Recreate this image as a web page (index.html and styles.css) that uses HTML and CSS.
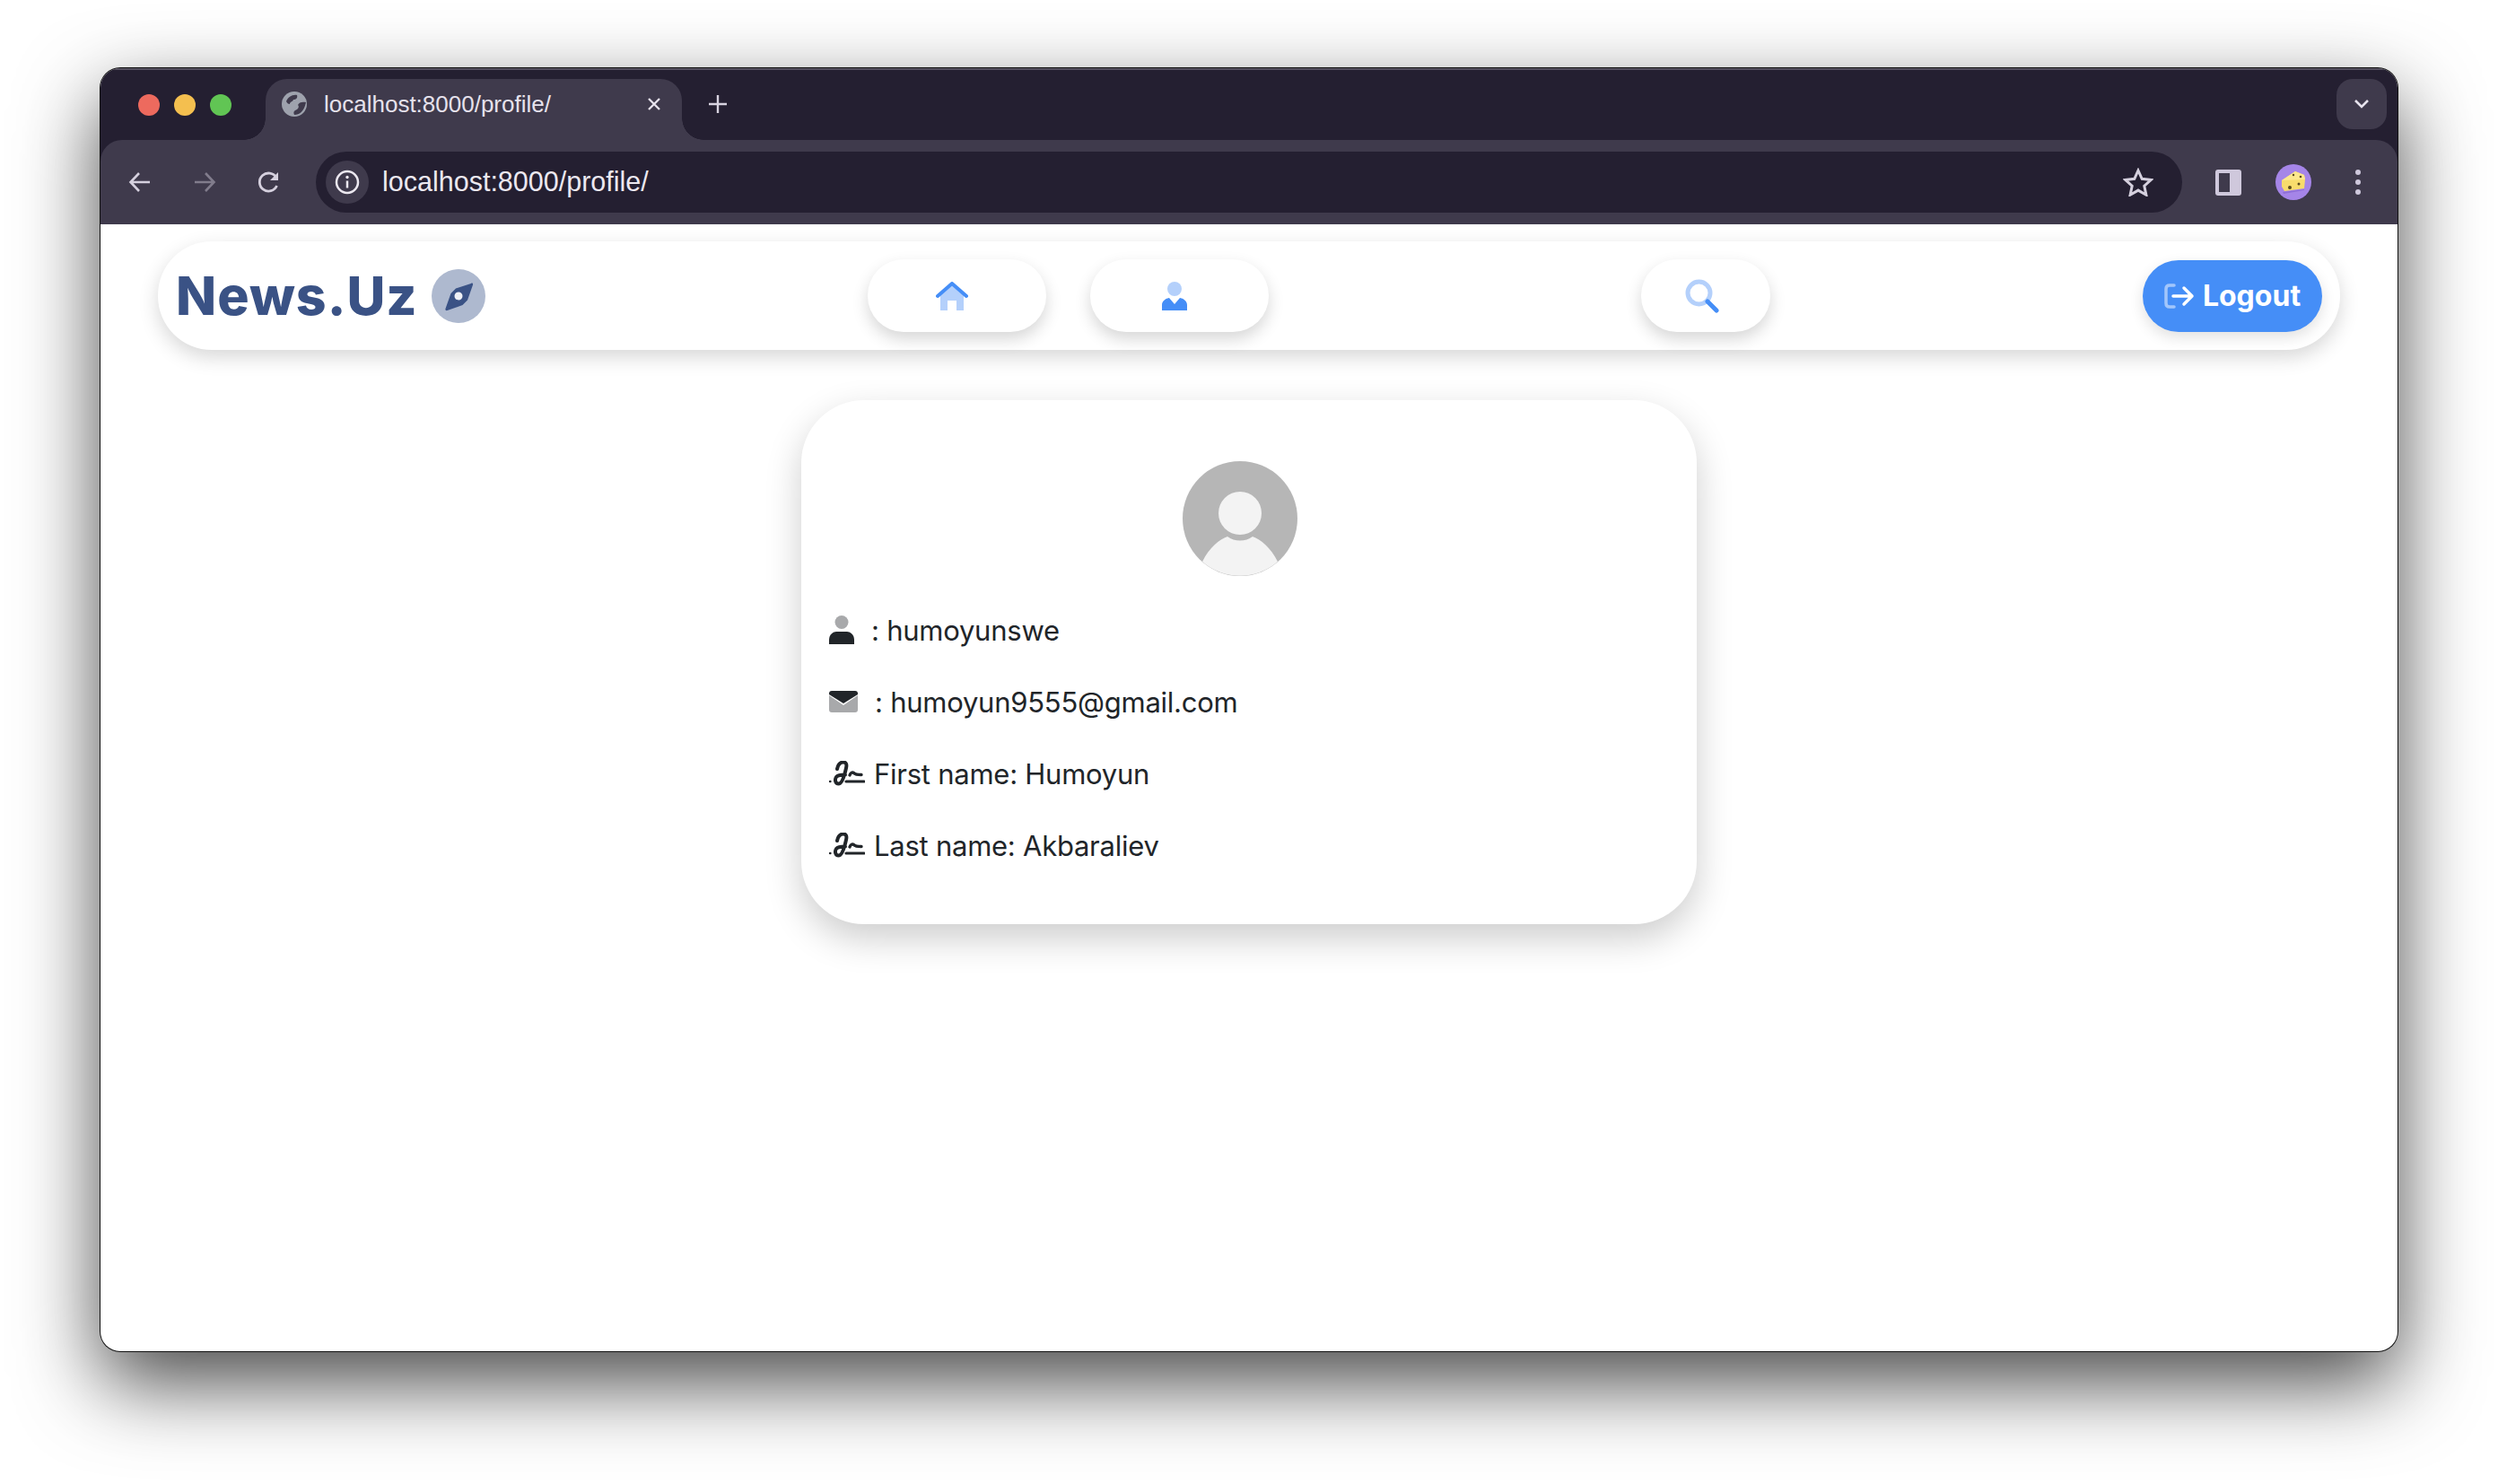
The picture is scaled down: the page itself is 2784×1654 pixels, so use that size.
FILE: index.html
```html
<!DOCTYPE html>
<html lang="en">
<head>
  <meta charset="UTF-8" />
  <title>News.Uz</title>
  <link rel="stylesheet" href="styles.css">
</head>
<body>

<div class="window">

  <div class="chrome">
    <div class="tabstrip">
      <div class="lights">
        <span class="light red"></span>
        <span class="light yellow"></span>
        <span class="light green"></span>
      </div>
      <div class="tab">
        <svg class="globe" viewBox="0 0 28 28">
          <circle cx="14" cy="14" r="14" fill="#9ea2ad"/>
          <path d="M5 11c2-5 7-8 12-7 1 3-1 5-4 5-1 3-4 2-4 5-2 0-3-1-4-3zM27 12c-4-1-8 0-9 3 2 2 0 5-3 6-2 1-2 3-1 5 6 0 11-4 13-14z" fill="#3f3a4c"/>
        </svg>
        <span class="tab-title">localhost:8000/profile/</span>
        <svg class="tab-close" viewBox="0 0 16 16"><path d="M2 2l12 12M14 2L2 14" stroke="#e6e2ec" stroke-width="2.4"/></svg>
      </div>
      <svg class="new-tab" viewBox="0 0 22 22"><path d="M11 1v20M1 11h20" stroke="#d8d3e0" stroke-width="2.4"/></svg>
      <div class="tab-menu">
        <svg viewBox="0 0 18 12" width="18" height="12"><path d="M2 2l7 7 7-7" fill="none" stroke="#e6e2ec" stroke-width="2.6"/></svg>
      </div>
    </div>

    <div class="toolbar">
      <svg class="tool-icon" viewBox="0 0 26 26"><path d="M24 13H3M12 3L2.500 13 12 23" fill="none" stroke="#d5d0de" stroke-width="2.600"/></svg>
      <svg class="tool-icon forward" viewBox="0 0 26 26"><path d="M2 13h21M14 3l9.500 10L14 23" fill="none" stroke="#817c8c" stroke-width="2.600"/></svg>
      <svg class="tool-icon reload" viewBox="0 0 26 26"><path d="M21.500 17a10 10 0 1 1-.5-9" fill="none" stroke="#d5d0de" stroke-width="2.800"/><path d="M23 2v9h-9z" fill="#d5d0de"/></svg>
      <div class="omnibox">
        <span class="info-chip">
          <svg viewBox="0 0 28 28" width="28" height="28"><circle cx="14" cy="14" r="12" fill="none" stroke="#ece8f0" stroke-width="2.500"/><path d="M14 12.500v8" stroke="#ece8f0" stroke-width="2.500"/><circle cx="14" cy="8.500" r="1.700" fill="#ece8f0"/></svg>
        </span>
        <span class="url">localhost:8000/profile/</span>
        <svg class="star" viewBox="0 0 34 32" width="34" height="32"><path d="M17 3l4.200 9.300 10.100 1.100-7.500 6.800 2.100 10-8.900-5.100-8.900 5.100 2.100-10-7.500-6.800 10.100-1.100z" fill="none" stroke="#d5d0de" stroke-width="3"/></svg>
      </div>
      <div class="panel-icon"><span class="panel-hole"></span></div>
      <svg class="cheese" viewBox="0 0 40 40" width="40" height="40">
        <circle cx="20" cy="20" r="20" fill="#a585e8"/>
        <path d="M8 31l24-3V29L9 33z" fill="#8f6fd6"/>
        <path d="M7 18l15-10 10 4 1 5-1 10-22 3-3-5z" fill="#f8dc6c"/>
        <path d="M7 18l15-10 10 4 1 5z" fill="#fbe88f"/>
        <circle cx="16" cy="26" r="2" fill="#5a4a1e"/>
        <circle cx="26" cy="22" r="1.500" fill="#5a4a1e"/>
        <circle cx="28" cy="14" r="1.300" fill="#5a4a1e"/>
        <circle cx="20" cy="12" r="1.200" fill="#5a4a1e"/>
      </svg>
      <div class="dots"><span></span><span></span><span></span></div>
    </div>
  </div>

  <div class="page">
    <nav class="navbar">
      <a class="brand">
        <span class="brand-name">News.Uz</span>
        <span class="compass">
          <svg viewBox="0 0 60 60" width="60" height="60">
            <path d="M44 16c1-1 2.500 0 2 1.500l-6 17-5.500 5.500-17 6c-1.500.5-2.500-.5-2-2l6-17 5.500-5.500z" fill="#3a5285"/>
            <circle cx="30" cy="30" r="4.500" fill="#eef0f5"/>
          </svg>
        </span>
      </a>
      <a class="nav-btn home-btn">
        <svg viewBox="0 0 36 32" width="36" height="32">
          <path d="M5 15L18 3l13 12v17h-8V21h-10v11H5z" fill="#b4d0fb"/>
          <path d="M2 16L18 2l16 14" fill="none" stroke="#458ef7" stroke-width="4" stroke-linecap="round" stroke-linejoin="round"/>
        </svg>
      </a>
      <a class="nav-btn user-btn">
        <svg viewBox="0 0 28 32" width="28" height="32">
          <ellipse cx="14" cy="8" rx="8" ry="8" fill="#b4d0fb"/>
          <path d="M0 32v-6c0-4 3-7 8-8l6 7 6-7c5 1 8 4 8 8v6z" fill="#458ef7"/>
        </svg>
      </a>
      <a class="nav-btn search-btn">
        <svg viewBox="0 0 38 38" width="38" height="38">
          <circle cx="15.500" cy="15.500" r="12.500" fill="none" stroke="#b4d0fb" stroke-width="5"/>
          <path d="M25 25l10 10" stroke="#458ef7" stroke-width="5" stroke-linecap="round"/>
        </svg>
      </a>
      <a class="logout-btn">
        <svg viewBox="0 0 34 30" width="34" height="30">
          <path d="M11 3H6C3.500 3 2 4.500 2 7v16c0 2.500 1.500 4 4 4h5" fill="none" stroke="#a2c6fb" stroke-width="3.500" stroke-linecap="round"/>
          <path d="M10 15h21M22 6l9 9-9 9" fill="none" stroke="#fff" stroke-width="3.500" stroke-linecap="round" stroke-linejoin="round"/>
        </svg>
        <span>Logout</span>
      </a>
    </nav>

    <main class="card">
      <svg class="avatar" viewBox="0 0 128 128" width="128" height="128">
        <circle cx="64" cy="64" r="64" fill="#b6b6b6"/>
        <ellipse cx="64" cy="58" rx="24" ry="24" fill="#f3f3f3"/>
        <path d="M22 112C30 96 41 87 50 84c8 6 20 6 28 0 9 3 20 12 28 28A64 64 0 0 1 22 112z" fill="#f3f3f3"/>
      </svg>

      <div class="row">
        <svg class="icon icon-user" viewBox="0 0 28 32" width="28" height="32">
          <circle cx="14" cy="7.500" r="7.500" fill="#a8a9ab"/>
          <path d="M0 32v-5c0-6 5-9 8-9h12c3 0 8 3 8 9v5z" fill="#212529"/>
        </svg>
        <span>: humoyunswe</span>
      </div>
      <div class="row">
        <svg class="icon icon-mail" viewBox="0 0 32 24" width="32" height="24">
          <path d="M0 5l16 11L32 5v16c0 2-1 3-3 3H3c-2 0-3-1-3-3z" fill="#a8a9ab"/>
          <path d="M3 0h26c2 0 3 1 3 3v1L16 14 0 4V3c0-2 1-3 3-3z" fill="#212529"/>
        </svg>
        <span>: humoyun9555@gmail.com</span>
      </div>
      <div class="row">
        <svg class="icon icon-sign" viewBox="0 0 40 28" width="40" height="28">
          <use href="#signature"/>
        </svg>
        <span>First name: Humoyun</span>
      </div>
      <div class="row">
        <svg class="icon icon-sign" viewBox="0 0 40 28" width="40" height="28">
          <g id="signature" fill="none" stroke="#212529" stroke-linecap="round">
            <path d="M1 23h.4" stroke-width="2.400"/>
            <path d="M9 9C10 4 13 1.500 16 1.500 19 1.500 20 4 19 8 17.500 15 15 25.500 10.500 25.500 7 25.500 6 21 8 18 10 15.500 14 15.500 18 15.500" stroke-width="4"/>
            <path d="M23 16c1-3 3-3.500 4.500-2.500 1.500 1.500 3.500 2 8.500 2" stroke-width="3.400"/>
            <path d="M19 23h20" stroke-width="3.200"/>
          </g>
        </svg>
        <span>Last name: Akbaraliev</span>
      </div>
    </main>
  </div>

</div>

</body>
</html>
```

FILE: styles.css
```css
* {
  box-sizing: border-box;
}

html,
body {
  height: 100%;
}

body {
  margin: 0;
  padding: 76px 0 0 112px;
  background-color: #fff;
  overflow: hidden;
  font-family: "Inter", "Liberation Sans", sans-serif;
  color: #212529;
}

.window {
  width: 2560px;
  height: 1430px;
  display: flex;
  flex-direction: column;
  border-radius: 22px;
  overflow: hidden;
  background-color: #fff;
  box-shadow: 0 0 0 1px #111, 0 35px 90px rgba(0, 0, 0, 0.72);
}

/* browser chrome */
.chrome {
  flex: none;
  background-color: #241f31;
  box-shadow: inset 0 2px 0 #55505f;
}

.tabstrip {
  height: 80px;
  display: flex;
  align-items: flex-start;
  padding-top: 12px;
}

.lights {
  display: flex;
  gap: 16px;
  padding: 17px 0 0 42px;
  width: 184px;
}

.light {
  width: 24px;
  height: 24px;
  border-radius: 50%;
}

.red { background-color: #ed6a5e; }
.yellow { background-color: #f4bf4f; }
.green { background-color: #61c554; }

.tab {
  width: 464px;
  height: 68px;
  display: flex;
  align-items: center;
  padding: 0 0 12px 18px;
  border-radius: 24px 24px 0 0;
  background-color: #3f3a4c;
  position: relative;
}

.tab::before,
.tab::after {
  content: "";
  position: absolute;
  bottom: 0;
  width: 24px;
  height: 24px;
}

.tab::before {
  left: -24px;
  background: radial-gradient(circle at 0 0, #241f31 23.500px, #3f3a4c 24px);
}

.tab::after {
  right: -24px;
  background: radial-gradient(circle at 100% 0, #241f31 23.500px, #3f3a4c 24px);
}

.globe {
  width: 28px;
  height: 28px;
  flex: none;
}

.tab-title {
  margin-left: 19px;
  width: 360px;
  font-family: "Liberation Sans", sans-serif;
  font-size: 26px;
  color: #e6e2ec;
  white-space: nowrap;
}

.tab-close {
  width: 16px;
  height: 16px;
  flex: none;
}

.new-tab {
  width: 22px;
  height: 22px;
  margin: 17px 0 0 29px;
  flex: none;
}

.tab-menu {
  width: 56px;
  height: 56px;
  margin-left: auto;
  margin-right: 12px;
  display: flex;
  align-items: center;
  justify-content: center;
  border-radius: 18px;
  background-color: #3f3a4c;
}

.toolbar {
  height: 94px;
  display: flex;
  align-items: center;
  padding-left: 31px;
  background-color: #3f3a4c;
  border-radius: 24px 24px 0 0;
}

.tool-icon {
  width: 26px;
  height: 26px;
  flex: none;
}

.forward {
  margin-left: 46px;
}

.reload {
  margin-left: 46px;
}

.omnibox {
  width: 2080px;
  height: 68px;
  margin-left: 39px;
  display: flex;
  align-items: center;
  padding: 0 32px 0 11px;
  border-radius: 34px;
  background-color: #241f31;
}

.info-chip {
  width: 48px;
  height: 48px;
  display: flex;
  align-items: center;
  justify-content: center;
  border-radius: 50%;
  background-color: #3f3a4c;
}

.url {
  margin-left: 15px;
  padding-bottom: 2px;
  flex: 1;
  font-family: "Liberation Sans", sans-serif;
  font-size: 30.5px;
  color: #ece8f0;
}

.panel-icon {
  width: 29px;
  height: 29px;
  margin-left: 37px;
  padding: 4px 13px 4px 4px;
  border-radius: 3px;
  background-color: #cfc8dc;
}

.panel-hole {
  display: block;
  width: 100%;
  height: 100%;
  background-color: #3f3a4c;
}

.cheese {
  margin-left: 38px;
  flex: none;
}

.dots {
  margin-left: 49px;
  display: flex;
  flex-direction: column;
  gap: 5px;
}

.dots span {
  width: 6px;
  height: 6px;
  border-radius: 50%;
  background-color: #cfc8dc;
}

/* page */
.page {
  flex: 1;
  padding-top: 19px;
}

.navbar {
  width: 2432px;
  height: 121px;
  margin-left: 64px;
  display: flex;
  align-items: center;
  padding-left: 24px;
  border-radius: 60px;
  background-color: #fff;
  box-shadow: 0 8px 22px rgba(0, 0, 0, 0.16);
}

.brand {
  width: 341px;
  flex: none;
  display: flex;
  align-items: center;
  justify-content: space-between;
}

.brand-name {
  margin-left: -4px;
  font-size: 59px;
  font-weight: 800;
  letter-spacing: 1px;
  color: #3a5285;
  line-height: 1;
}

.compass {
  width: 60px;
  height: 60px;
  border-radius: 50%;
  background-color: #aeb9cf;
}

.compass svg {
  display: block;
}

.nav-btn {
  width: 199px;
  height: 81px;
  display: flex;
  align-items: center;
  justify-content: center;
  border-radius: 40px;
  background-color: #fff;
  box-shadow: 0 8px 18px rgba(0, 0, 0, 0.16);
}

.home-btn {
  margin-left: 426px;
  padding-right: 12px;
}

.user-btn {
  margin-left: 49px;
  padding-right: 11px;
}

.search-btn {
  width: 144px;
  margin-left: 415px;
  padding-right: 8px;
}

.logout-btn {
  width: 200px;
  height: 80px;
  margin-left: 415px;
  display: flex;
  align-items: center;
  justify-content: center;
  gap: 9px;
  border-radius: 40px;
  background-color: #458ef7;
  color: #fff;
  font-size: 32px;
  font-weight: 700;
  box-shadow: 0 6px 16px rgba(0, 0, 0, 0.12);
}

.card {
  width: 998px;
  height: 584px;
  margin: 56px auto 0;
  padding: 68px 51px 0 31px;
  border-radius: 70px;
  background-color: #fff;
  box-shadow: 0 16px 40px rgba(0, 0, 0, 0.2);
}

.avatar {
  display: block;
  margin: 0 auto 20px;
}

.row {
  height: 80px;
  display: flex;
  align-items: center;
  font-size: 31px;
  letter-spacing: -0.25px;
}

.icon {
  flex: none;
}

.icon-user {
  margin-right: 19px;
}

.icon-mail {
  margin-right: 19px;
}

.icon-sign {
  margin-right: 10px;
}
```
